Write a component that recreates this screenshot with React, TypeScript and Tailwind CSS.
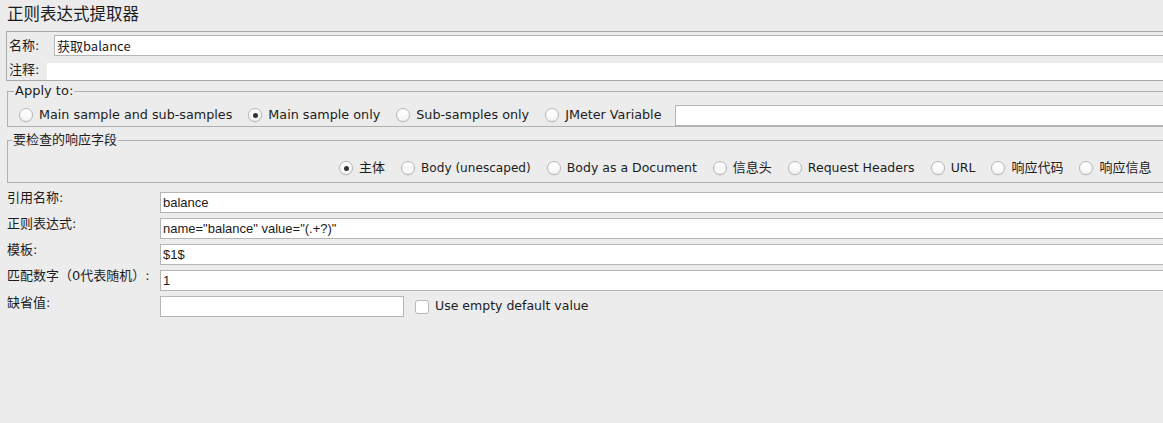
import React from "react";

const FONT = "font-['DejaVu_Sans','Noto_Sans_CJK_SC',sans-serif]";

function Radio({
  label,
  checked,
  size = "text-[12.5px]",
}: {
  label: string;
  checked?: boolean;
  size?: string;
}) {
  return (
    <label className="flex items-center gap-[6px] whitespace-nowrap">
      <span className="flex h-[14px] w-[14px] items-center justify-center rounded-full border border-[#b8b8b8] bg-gradient-to-b from-white to-[#f4f4f4] shadow-[0_0.5px_1px_rgba(0,0,0,0.12)]">
        {checked && <span className="h-[5px] w-[5px] rounded-full bg-[#333]" />}
      </span>
      <span className={size}>{label}</span>
    </label>
  );
}

function TextInput({ value, className = "" }: { value?: string; className?: string }) {
  return (
    <div
      className={`flex h-[21px] items-center border border-[#b5b5b5] bg-white pl-[2px] font-['Liberation_Sans','Noto_Sans_CJK_SC',sans-serif] text-[13px] ${className}`}
    >
      {value}
    </div>
  );
}

const rows: [string, string][] = [
  ["引用名称:", "balance"],
  ["正则表达式:", 'name="balance" value="(.+?)"'],
  ["模板:", "$1$"],
  ["匹配数字（0代表随机）:", "1"],
];

export default function App() {
  return (
    <div className={`h-[423px] w-[1163px] overflow-hidden bg-[#ececec] text-[13px] text-[#1c1c1c] ${FONT}`}>
      <div className="w-[1185px]">
        <div className="h-[31px] pl-[7px] pt-[4px] text-[16.5px] leading-[22px]">正则表达式提取器</div>

        <div className="ml-[6px] border border-[#a8a8a8] pl-[1px]">
          <div className="flex h-[27px] items-center">
            <span className="w-[46px] pl-[1px]">名称:</span>
            <TextInput value="获取balance" className="flex-1 font-['Noto_Sans_CJK_SC',sans-serif]" />
          </div>
          <div className="flex h-[21px] items-center">
            <span className="w-[39px] pl-[1px]">注释:</span>
            <div className="h-[17px] flex-1 self-end bg-white" />
          </div>
        </div>

        <fieldset className="ml-[7px] mt-[2px] h-[44px] border border-[#b0b0b0]">
          <legend className="ml-[6px] px-[1px] leading-[16px]">Apply to:</legend>
          <div className="mt-[3px] flex h-[26px] items-center gap-[16px] pl-[11px]">
            <Radio label="Main sample and sub-samples" size="text-[12.75px]" />
            <Radio label="Main sample only" checked size="text-[12.75px]" />
            <Radio label="Sub-samples only" size="text-[12.75px]" />
            <Radio label="JMeter Variable" size="text-[12.75px]" />
            <TextInput className="ml-[-3px] flex-1" />
          </div>
        </fieldset>

        <fieldset className="ml-[7px] mt-[5px] h-[51px] border border-[#b0b0b0]">
          <legend className="ml-[4px] px-[1px] leading-[16px]">要检查的响应字段</legend>
          <div className="mt-[7px] flex h-[26px] items-center gap-[16px] pl-[331px]">
            <Radio label="主体" checked size="text-[13px]" />
            <Radio label="Body (unescaped)" size="text-[12.1px]" />
            <Radio label="Body as a Document" />
            <Radio label="信息头" size="text-[13px]" />
            <Radio label="Request Headers" />
            <Radio label="URL" />
            <Radio label="响应代码" size="text-[13px]" />
            <Radio label="响应信息" size="text-[13px]" />
          </div>
        </fieldset>

        <div className="mt-[9px] flex flex-col gap-[5px] pl-[7px]">
          {rows.map(([label, value]) => (
            <div key={label} className="flex h-[21px] items-center">
              <span className="-mt-[2px] w-[153px] self-start leading-[16px]">{label}</span>
              <TextInput value={value} className="flex-1" />
            </div>
          ))}
          <div className="flex h-[21px] items-center">
            <span className="-mt-[1px] w-[153px] self-start leading-[16px]">缺省值:</span>
            <TextInput className="w-[244px]" />
            <label className="ml-[11px] flex items-center gap-[6px]">
              <span className="h-[14px] w-[14px] rounded-[3px] border border-[#b8b8b8] bg-white" />
              <span className="text-[12.5px]">Use empty default value</span>
            </label>
          </div>
        </div>
      </div>
    </div>
  );
}
